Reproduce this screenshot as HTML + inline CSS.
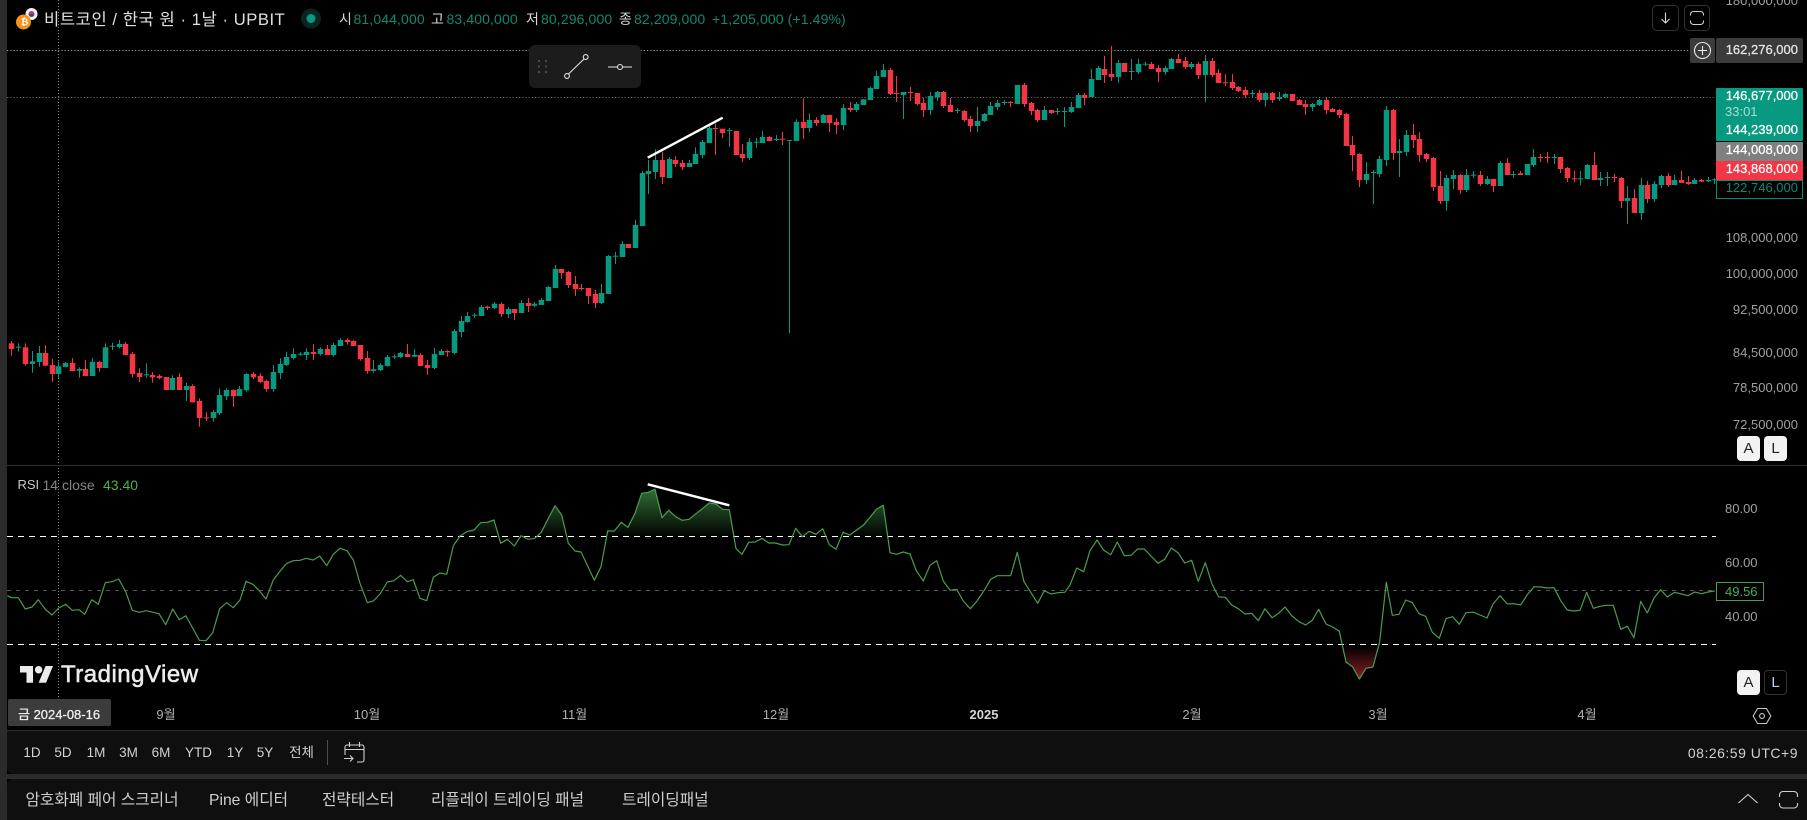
<!DOCTYPE html>
<html lang="ko">
<head>
<meta charset="utf-8">
<title>비트코인 / 한국 원 차트</title>
<style>
html,body{margin:0;padding:0;background:#000;}
body{width:1807px;height:820px;overflow:hidden;position:relative;font-family:"Liberation Sans","Noto Sans CJK KR",sans-serif;color:#d8d8d8;}
#chart{position:absolute;left:0;top:0;}
.t{position:absolute;height:20px;line-height:20px;white-space:nowrap;font-size:13px;}
.r{text-align:right;}
.c{text-align:center;transform:translateX(-50%);}
.px{color:#a0a0a0;right:9px;}
.lb{-webkit-text-stroke:.25px currentColor;}
.box{position:absolute;}
.g{color:#0d8a75;font-size:14px;letter-spacing:.12px;}
.w{color:#d6d6d6;font-size:14px;}
.tab{font-size:15.7px;color:#cfcfcf;}
.tb{font-size:13.5px;color:#d2d2d2;}
.ax{color:#b0b0b0;font-size:13px;}
.btn{position:absolute;box-sizing:border-box;border-radius:4px;text-align:center;font-size:15px;line-height:25px;}
</style>
</head>
<body>
<svg id="chart" width="1807" height="820" viewBox="0 0 1807 820" xmlns="http://www.w3.org/2000/svg">
<defs>
<linearGradient id="gf" gradientUnits="userSpaceOnUse" x1="0" y1="489" x2="0" y2="536"><stop offset="0" stop-color="#37793b" stop-opacity=".9"/><stop offset="1" stop-color="#37793b" stop-opacity=".03"/></linearGradient>
<linearGradient id="rf" gradientUnits="userSpaceOnUse" x1="0" y1="646" x2="0" y2="679"><stop offset="0" stop-color="#8a1f24" stop-opacity="0"/><stop offset="1" stop-color="#8a1f24" stop-opacity="1"/></linearGradient>
<clipPath id="up"><rect x="7" y="470" width="1710" height="66"/></clipPath>
<clipPath id="dn"><rect x="7" y="644" width="1710" height="50"/></clipPath>
</defs>
<rect width="1807" height="820" fill="#000"/>
<!-- crosshair and price lines -->
<line x1="58.5" y1="0" x2="58.5" y2="698" stroke="#8c8c8c" stroke-dasharray="1 2"/>
<line x1="7" y1="50.5" x2="1690" y2="50.5" stroke="#9a9a9a" stroke-dasharray="1.2 2"/>
<line x1="7" y1="97.5" x2="1716" y2="97.5" stroke="#5f6d68" stroke-dasharray="1.2 2"/>
<g id="candles"></g>
<line x1="647.7" y1="157.7" x2="722.7" y2="117.7" stroke="#fff" stroke-width="2.4"/>
<!-- separators -->
<rect x="7" y="465" width="1800" height="1" fill="#2e2e2e"/>
<!-- RSI -->
<line x1="7" y1="590.5" x2="1716" y2="590.5" stroke="#555" stroke-dasharray="4 5"/>
<path id="rsiG" fill="url(#gf)" clip-path="url(#up)"/>
<path id="rsiR" fill="url(#rf)" clip-path="url(#dn)"/>
<line x1="7" y1="536.5" x2="1716" y2="536.5" stroke="#fff" stroke-dasharray="6 5"/>
<line x1="7" y1="644.5" x2="1716" y2="644.5" stroke="#fff" stroke-dasharray="6 5"/>
<path id="rsi" fill="none" stroke="#4b9c50" stroke-width="1.2" stroke-linejoin="round"/>
<line x1="647.7" y1="484.3" x2="729.3" y2="505.3" stroke="#fff" stroke-width="2.4"/>
<!-- TV logo -->
<g transform="translate(20,662.3) scale(.93)" fill="#ececec"><path d="M14 22H7V11H0V4h14v18zM28 22h-8l7.5-18h8L28 22z"/><circle cx="20" cy="8" r="4"/></g>
<!-- left strip and panels -->
<rect x="0" y="0" width="7" height="820" fill="#2b2b2b"/>
<rect x="7" y="730" width="1800" height="1" fill="#2e2e2e"/>
<rect x="7" y="774" width="1800" height="5" fill="#2b2b2b"/>
<path d="M7 731H1807V774H13a6 6 0 0 1-6-6Z" fill="#0f0f0f"/>
<path d="M7 785a6 6 0 0 1 6-6H1807V820H7Z" fill="#0f0f0f"/>
<!-- date label -->
<rect x="8" y="699" width="103" height="27" rx="2" fill="#3c3c3c"/>
<!-- header icons -->
<circle cx="311" cy="18.5" r="10" fill="#08251f"/>
<circle cx="311" cy="18.5" r="4.5" fill="#089981"/>
<circle cx="31.5" cy="14" r="6" fill="#f2f2f2"/>
<path d="M28.5 14a3 3 0 0 1 6 0Z" fill="#d8324a"/>
<path d="M28.5 14a3 3 0 0 0 6 0Z" fill="#2a4a9a"/>
<circle cx="23.5" cy="22" r="7.5" fill="#f7931a"/>
<!-- draw toolbar -->
<rect x="529" y="45" width="112" height="43" rx="6" fill="#1c1c1c"/>
<g fill="#4a4a4a"><rect x="538" y="60" width="2" height="2"/><rect x="545" y="60" width="2" height="2"/><rect x="538" y="65.5" width="2" height="2"/><rect x="545" y="65.5" width="2" height="2"/><rect x="538" y="71" width="2" height="2"/><rect x="545" y="71" width="2" height="2"/></g>
<g fill="none" stroke="#e2e2e2" stroke-width="1.1"><line x1="568.5" y1="74" x2="584" y2="59"/><circle cx="567" cy="76" r="2.4"/><circle cx="585.7" cy="57" r="2.4"/><path d="M608 67h9.5M622.5 67H632"/><circle cx="620" cy="67" r="2.5"/></g>
<!-- top right buttons -->
<rect x="1652.5" y="5.5" width="26" height="25" rx="4" fill="#000" stroke="#333"/>
<path d="M1665.5 12.5v10.5M1661.5 19l4 4 4-4" fill="none" stroke="#d8d8d8" stroke-width="1.1"/>
<rect x="1684.5" y="5.5" width="25" height="25" rx="4" fill="#000" stroke="#333"/>
<path d="M1690.5 15.5v-1a3 3 0 0 1 3-3h7a3 3 0 0 1 3 3v1M1690.5 20.5v1a3 3 0 0 0 3 3h7a3 3 0 0 0 3-3v-1" fill="none" stroke="#d0d0d0" stroke-width="1.1"/>
<!-- price labels -->
<rect x="1690" y="38" width="25" height="25" rx="2" fill="#3b3b3b"/>
<rect x="1716" y="38" width="87" height="25" rx="2" fill="#3b3b3b"/>
<circle cx="1702.5" cy="50.5" r="8" fill="none" stroke="#ececec" stroke-width="1.1"/>
<path d="M1702.5 46v9M1698 50.5h9" stroke="#ececec" stroke-width="1.1"/>
<rect x="1716" y="88" width="87" height="53" rx="1" fill="#089981"/>
<rect x="1716" y="142" width="87" height="19" fill="#808080"/>
<rect x="1716" y="161" width="87" height="19" fill="#f23645"/>
<rect x="1716.5" y="180.5" width="86" height="18" fill="#000" stroke="#0d8a75"/>
<rect x="1716.5" y="582.5" width="47" height="18" fill="#000" stroke="#4b9c50"/>
<!-- gear -->
<path d="M1757.5 708.5h9l4.3 7.5-4.3 7.5h-9l-4.3-7.5Z" fill="none" stroke="#c8c8c8" stroke-width="1.1"/>
<circle cx="1762" cy="716" r="2.4" fill="none" stroke="#c8c8c8" stroke-width="1.1"/>
<!-- toolbar -->
<line x1="327.5" y1="740" x2="327.5" y2="765" stroke="#4d4d4d"/>
<g fill="none" stroke="#d0d0d0" stroke-width="1.1"><path d="M345 755V747a2 2 0 0 1 2-2h15a2 2 0 0 1 2 2v13a2 2 0 0 1-2 2h-5M345 749.5h19M349.5 742v5M359.5 742v5M344 758.5h9M350 755.5l3 3-3 3"/></g>
<!-- bottom right icons -->
<path d="M1738.5 803l9.5-8.5 9.5 8.5" fill="none" stroke="#d0d0d0" stroke-width="1.1"/>
<path d="M1779.5 797v-2a3.5 3.5 0 0 1 3.5-3.5h11a3.5 3.5 0 0 1 3.5 3.5v2M1779.5 803v1.5a3.5 3.5 0 0 0 3.5 3.5h11a3.5 3.5 0 0 0 3.5-3.5V803" fill="none" stroke="#d0d0d0" stroke-width="1.1"/>
</svg>

<!-- header -->
<div class="t" style="left:21px;top:12px;width:6px;font-size:9px;font-weight:bold;color:#fff;">₿</div>
<div class="t" style="left:44px;top:10px;font-size:16.6px;color:#e0e0e0;letter-spacing:.55px;">비트코인 / 한국 원 · 1날 · UPBIT</div>
<div class="t w" style="left:339px;top:9px;">시</div><div class="t g" style="left:353.5px;top:9px;">81,044,000</div>
<div class="t w" style="left:431px;top:9px;">고</div><div class="t g" style="left:446.5px;top:9px;">83,400,000</div>
<div class="t w" style="left:526px;top:9px;">저</div><div class="t g" style="left:541px;top:9px;">80,296,000</div>
<div class="t w" style="left:619px;top:9px;">종</div><div class="t g" style="left:634px;top:9px;">82,209,000</div>
<div class="t g" style="left:712px;top:9px;">+1,205,000 (+1.49%)</div>

<!-- price axis -->
<div class="t r px" style="top:-9px;">180,000,000</div>
<div class="t r lb" style="right:9px;top:40px;color:#e6e6e6;">162,276,000</div>
<div class="t r lb" style="right:9px;top:86px;color:#fff;">146,677,000</div>
<div class="t" style="left:1725px;top:102px;color:#a6ded3;">33:01</div>
<div class="t r lb" style="right:9px;top:120px;color:#fff;">144,239,000</div>
<div class="t r lb" style="right:9px;top:140px;color:#fff;">144,008,000</div>
<div class="t r lb" style="right:9px;top:159px;color:#fff;">143,868,000</div>
<div class="t r" style="right:9px;top:178px;color:#0d8a75;">122,746,000</div>
<div class="t r px" style="top:228px;">108,000,000</div>
<div class="t r px" style="top:264px;">100,000,000</div>
<div class="t r px" style="top:300px;">92,500,000</div>
<div class="t r px" style="top:343px;">84,500,000</div>
<div class="t r px" style="top:378px;">78,500,000</div>
<div class="t r px" style="top:415px;">72,500,000</div>
<div class="btn" style="left:1737px;top:436px;width:23px;height:25px;background:#f2f2f2;color:#222;">A</div>
<div class="btn" style="left:1764px;top:436px;width:23px;height:25px;background:#f2f2f2;color:#222;">L</div>

<!-- RSI -->
<div class="t" style="left:17.5px;top:475px;font-size:13px;color:#c8c8c8;">RSI</div>
<div class="t" style="left:42.5px;top:475px;font-size:14px;color:#868686;">14 close</div>
<div class="t" style="left:103px;top:475px;font-size:14px;color:#4caf50;">43.40</div>
<div class="t px" style="left:1725px;top:499px;">80.00</div>
<div class="t px" style="left:1725px;top:553px;">60.00</div>
<div class="t px" style="left:1725px;top:607px;">40.00</div>
<div class="t" style="left:1725px;top:582px;color:#4caf50;">49.56</div>
<div class="btn" style="left:1737px;top:670px;width:23px;height:25px;background:#f2f2f2;color:#222;">A</div>
<div class="btn" style="left:1764px;top:670px;width:23px;height:25px;background:#000;border:1px solid #333;color:#a8d8f0;line-height:23px;">L</div>
<div class="t" style="left:61px;top:665px;font-size:24px;color:#ececec;letter-spacing:.5px;-webkit-text-stroke:.55px #ececec;">TradingView</div>

<!-- time axis -->
<div class="t lb" style="left:18px;top:705px;color:#f0f0f0;font-size:13px;">금 2024-08-16</div>
<div class="t c ax" style="left:166px;top:705px;">9월</div>
<div class="t c ax" style="left:367px;top:705px;">10월</div>
<div class="t c ax" style="left:574.5px;top:705px;">11월</div>
<div class="t c ax" style="left:776px;top:705px;">12월</div>
<div class="t c" style="left:984px;top:705px;font-weight:bold;color:#d4d4d4;">2025</div>
<div class="t c ax" style="left:1192px;top:705px;">2월</div>
<div class="t c ax" style="left:1378px;top:705px;">3월</div>
<div class="t c ax" style="left:1587px;top:705px;">4월</div>

<!-- toolbar -->
<div class="t c tb" style="left:32px;top:743px;">1D</div>
<div class="t c tb" style="left:63px;top:743px;">5D</div>
<div class="t c tb" style="left:96px;top:743px;">1M</div>
<div class="t c tb" style="left:128.5px;top:743px;">3M</div>
<div class="t c tb" style="left:161px;top:743px;">6M</div>
<div class="t c tb" style="left:198.5px;top:743px;">YTD</div>
<div class="t c tb" style="left:235px;top:743px;">1Y</div>
<div class="t c tb" style="left:265px;top:743px;">5Y</div>
<div class="t c tb" style="left:301.5px;top:743px;">전체</div>
<div class="t r" style="right:9px;top:743px;font-size:14px;letter-spacing:.5px;color:#d0d0d0;">08:26:59 UTC+9</div>

<!-- bottom tabs -->
<div class="t tab" style="left:25.5px;top:791px;">암호화폐 페어 스크리너</div>
<div class="t tab" style="left:209px;top:791px;">Pine 에디터</div>
<div class="t tab" style="left:322px;top:791px;">전략테스터</div>
<div class="t tab" style="left:431px;top:791px;">리플레이 트레이딩 패널</div>
<div class="t tab" style="left:622px;top:791px;">트레이딩패널</div>

<script>
(function(){
var C={g:"#089981",r:"#f23645"};
var D=[
[0,320,"35 r 70 87 63 107;55 g 80 82 70 95;76 r 82 132 70 137;97 g 124 132 93 158;117 g 99 126 78 140;136 r 99 137 75 139;157 r 135 162 117 185;176 g 139 162 125 175;197 g 129 141 126 141;217 r 129 153 114 153;237 g 147 152 142 173;256 r 147 168 120 168;277 g 126 168 114 168;298 r 126 144 122 155;317 g 82 144 70 144;337 g 77 79 68 90;358 g 72 81 60 85;377 r 72 105 66 105;398 r 102 162 96 173;418 r 159 171 145 186;438 g 163 165 130 173;458 r 165 172 156 188;478 r 168 174 163 178;499 r 171 210 171 210;518 g 174 210 166 210;539 r 171 210 159 210;559 g 198 210 189 243;577 r 198 247 193 248;598 r 243 294 235 320;619 r 292 294 277 303;640 g 276 294 270 305;658 g 225 280 205 285;679 g 210 229 205 240;700 r 210 229 208 261;718 g 207 228 198 228;739 g 162 211 160 215;760 r 162 172 156 177;781 r 168 186 160 190;799 r 183 207 179 215;820 g 156 207 135 215;841 g 132 159 115 177;859 g 111 135 95 138;880 g 102 114 85 119;901 g 101 103 96 108;920 g 96 105 85 120;940 r 96 102 72 120;961 g 87 102 82 107;982 r 87 105 75 105;1001 g 75 105 68 110;1021 g 60 78 55 78;1042 r 60 66 55 74;1061 r 63 78 60 78;1081 r 75 117 75 122;1102 r 114 153 93 161;1120 g 148 153 120 158;1142 g 135 150 130 153;1162 g 111 138 105 140;1183 g 109 111 104 117;1201 g 99 111 96 114;1222 r 102 111 72 111;1243 g 105 110 87 111;1262 r 105 138 99 138;1282 r 135 144 120 165;1303 g 102 144 84 147;1324 g 93 105 87 105;1342 r 93 97 90 110;1363 g 33 99 28 103"],
[450,140,"34 g 543 576 528 591;53 g 528 546 516 548;73 g 524 527 520 534;94 g 501 528 495 528;113 r 500 504 497 510;133 g 491 504 486 507;154 r 492 522 487 531;175 g 507 522 501 534;193 r 507 519 507 540;214 g 489 519 480 519;235 r 489 498 474 516;253 g 491 497 486 501;274 g 480 495 474 495;295 g 441 483 438 483;316 g 387 444 375 444;334 r 387 399 387 417;355 r 396 435 393 444;376 r 432 447 408 468;394 r 444 447 432 451;415 r 444 468 444 492;436 r 462 489 450 504;454 g 459 489 432 492;475 g 348 462 345 462;496 g 347 350 336 372;517 g 312 351 303 351;535 r 312 324 312 324;556 g 255 324 240 324;577 g 99 258 93 258;595 g 93 102 60 162"],
[600,40,"166 g 360 396 328 417;187 r 360 411 335 432;208 g 357 414 352 414;227 r 360 372 348 381;247 r 369 381 360 390;268 g 369 381 360 381;287 g 342 372 322 372;307 g 306 345 300 354;328 g 264 309 250 309;346 r 264 266 250 345;367 r 266 279 266 294;388 g 270 273 264 321;409 r 273 345 273 345;427 r 342 354 312 366;448 g 306 354 294 360;469 g 305 307 294 323;487 g 291 309 273 309;508 r 291 303 288 303;529 g 297 299 285 303;547 r 296 298 276 315;568 g 300 302 300 879;589 g 246 303 238 303;610 r 246 264 175 297;628 g 240 264 220 276;649 r 240 249 232 258;670 g 225 249 222 249;688 r 225 249 225 276;709 r 246 255 235 282;730 g 204 255 192 270;751 r 204 210 186 216;769 g 192 210 186 216;790 g 178 195 178 195;811 g 144 180 140 180;829 g 108 147 93 147;850 g 90 111 72 111;871 r 90 162 84 165;889 r 159 161 108 186;910 g 156 165 156 237;931 r 156 158 141 183;952 r 159 192 159 195;970 r 189 210 174 231;991 g 168 210 156 225;1012 g 156 171 153 183;1030 r 156 198 153 204;1051 r 195 216 174 216;1072 g 210 213 204 219;1093 r 213 240 210 246;1111 r 237 258 228 276;1132 g 243 258 201 276;1153 g 222 243 219 246;1171 g 198 225 186 225;1192 g 189 201 180 210;1213 g 186 189 180 195;1232 r 186 188 183 201;1252 g 135 192 135 192;1273 r 135 192 129 201;1294 r 189 213 186 225;1313 r 210 240 207 246;1333 g 210 240 198 240;1354 r 210 219 210 222;1372 g 213 216 204 225;1393 g 213 215 201 261;1414 g 201 216 186 219;1435 g 165 204 159 204;1453 r 165 174 159 195;1474 g 117 171 87 171"],
[1000,40,"295 g 84 120 78 120;313 r 87 105 48 129;334 r 102 111 18 123;355 g 69 111 60 129;373 r 69 96 69 96;394 g 93 96 57 120;415 g 72 96 57 102;436 g 71 74 66 78;454 r 72 87 66 87;475 r 84 96 75 126;496 g 84 96 78 105;514 g 57 87 54 87;535 r 57 69 42 69;556 r 63 81 51 87;574 g 72 81 66 87;595 r 72 105 66 117;616 g 63 105 45 186;637 r 63 105 54 111;655 r 99 129 87 129;676 r 127 129 102 138;697 r 126 144 102 150;715 r 141 153 138 156;736 r 150 165 141 174;757 g 159 161 150 174;778 r 159 180 150 186;796 g 159 180 156 201;817 r 159 180 156 189;838 g 171 177 156 183;857 g 162 171 159 174;877 r 162 183 162 183;898 r 180 195 177 195;916 r 192 201 180 225;937 g 192 201 189 213;958 g 180 195 177 198;979 r 180 210 171 222;997 r 207 216 204 216;1018 r 210 225 207 234;1039 r 222 318 219 318;1057 r 315 345 288 393;1078 r 342 420 340 441;1099 g 402 420 366 432"],
[1300,90,"220 g 246 248 240 342;238 g 207 252 198 261;259 g 60 210 48 228;280 r 60 189 57 210;298 g 183 189 147 261;319 g 135 186 120 198;340 r 135 150 102 174;358 r 147 195 126 216;379 r 192 207 189 216;400 r 204 291 201 303;421 r 288 333 243 342;439 g 264 333 255 363;460 g 255 267 240 297;481 r 255 300 252 312;499 g 255 300 237 306;520 g 254 257 243 264;541 r 255 282 243 288;562 g 267 282 258 285;580 r 267 288 267 306;601 g 219 288 213 288;622 r 219 255 204 255;640 g 252 254 243 264;661 r 250 255 243 255;682 g 222 255 222 255;700 g 201 225 177 231;721 r 201 203 192 216;742 r 201 203 186 219;763 g 201 203 192 222;781 r 201 237 201 249;802 r 234 264 231 276;823 r 265 268 243 276;841 g 265 267 243 285;862 g 225 267 222 267;883 r 225 270 186 270;901 g 264 270 246 288;922 g 261 264 246 288;943 r 261 263 252 276;964 r 264 333 261 354;982 g 324 333 288 402;1003 r 324 369 297 369;1024 g 285 369 264 390;1042 r 285 327 273 339;1063 g 282 327 273 336;1084 g 258 285 255 294;1105 r 258 285 249 291;1123 g 270 285 255 285;1144 r 270 279 243 279;1165 r 276 282 258 285;1183 g 270 282 264 282;1204 r 270 275 267 276;1225 g 270 274 261 276;1243 g 268 270 264 282"]
];
var g=document.getElementById("candles"),h="";
D.forEach(function(d){
 d[2].split(";").forEach(function(s){
  var p=s.split(" "),x=d[0]+p[0]/3,t=d[1]+p[2]/3,b=d[1]+p[3]/3,hi=d[1]+p[4]/3,lo=d[1]+p[5]/3,c=C[p[1]];
  var xr=Math.round(x-.5);
  h+='<rect x="'+xr+'" y="'+hi.toFixed(1)+'" width="1" height="'+(lo-hi).toFixed(1)+'" fill="'+c+'"/>';
  var bh=Math.max(b-t,1);
  h+='<rect x="'+(xr-2.25)+'" y="'+t.toFixed(1)+'" width="5.5" height="'+bh.toFixed(1)+'" fill="'+c+'"/>';
 });
});
g.innerHTML=h;
var R=[
[0,470,"22,377;35,383;55,383;76,417;96,411;115,389;136,418;156,435;176,414;197,403;217,421;237,419;254,433;275,389;295,403;316,338;336,335;356,327;377,365;397,421;418,427;438,422;458,427;477,431;497,464;518,417;538,449;557,437;578,474;598,511;618,512;638,488;659,416;680,398;700,413;720,390;738,334;759,343;778,362;798,387;820,330;840,304;859,281;880,272;900,271;918,265;940,270;959,258;980,287;1000,253;1020,235;1041,242;1060,270;1080,340;1102,398;1120,393;1140,372;1162,336;1182,332;1202,316;1222,335;1240,329;1260,385;1280,392;1300,322;1320,309;1340,313;1360,227;1380,198;1400,185;1422,180;1442,158;1462,157;1482,150"],
[500,470,"2,220;22,208;43,228;63,197;84,208;104,205;124,187;144,147;165,107;185,135;205,220;225,243;243,246;263,288;283,331;303,290;323,183;343,183;364,157;384,172;405,130;425,70;445,67;465,58;486,143;506,121;527,140;547,151;567,148;588,131;608,115;628,99;648,102;668,118;688,119;708,236;726,253;746,217;766,216;786,205;806,219;826,219;848,225;867,224;887,175;907,200;928,184;948,193;968,176;988,224;1008,238;1029,187;1049,195;1069,181;1090,166;1110,142;1130,117;1150,106;1170,248;1190,253;1210,246;1230,252;1249,302;1270,333;1290,286;1310,272;1330,333"],
[950,520,"0,211;20,208;40,243;61,266;81,243;102,212;122,178;142,167;162,167;182,167;202,97;222,185;243,218;263,250;283,212;303,222;323,218;344,217;360,195;380,144;401,155;420,92;441,60;461,91;482,104;502,66;523,107;543,106;563,87;583,87;603,108;624,130;644,118;664,84;684,98;704,129;725,121;745,184;766,128;786,192;806,231;826,232;845,255;865,266;885,282;905,280;925,302;945,266;966,293;986,280;1005,261;1026,288;1047,305;1067,315;1087,301;1106,268;1128,312;1148,321;1168,334;1188,426;1208,441;1228,477;1248,445;1269,441;1289,365;1309,187;1327,286;1347,283;1367,240;1387,248;1407,281;1427,289;1447,337;1468,355;1488,296;1508,290;1528,313;1548,278;1569,277"],
[1473,612,"0,0;21,9;42,18;60,-24"],
[1500,430,"0,497;22,522;42,521;62,525;82,494;102,470;122,471;142,474;162,473;182,512;202,540;222,543;240,541;260,487;280,535;300,529;320,526;340,526;362,598;382,589;402,623;422,514;442,549;462,504;482,479;502,501;524,487;544,492;564,497;584,486;604,491;624,486;644,483"]
];
var pts=[];
R.forEach(function(d){
 d[2].split(";").forEach(function(s){
  var a=s.split(",");
  pts.push((d[0]+a[0]/3).toFixed(1)+" "+(d[1]+a[1]/3).toFixed(1));
 });
});
var line=pts.join("L"),fx=pts[0].split(" ")[0],lx=pts[pts.length-1].split(" ")[0];
document.getElementById("rsi").setAttribute("d","M"+line);
document.getElementById("rsiG").setAttribute("d","M"+fx+" 536.5L"+line+"L"+lx+" 536.5Z");
document.getElementById("rsiR").setAttribute("d","M"+fx+" 644.5L"+line+"L"+lx+" 644.5Z");
})();
</script>
</body>
</html>
